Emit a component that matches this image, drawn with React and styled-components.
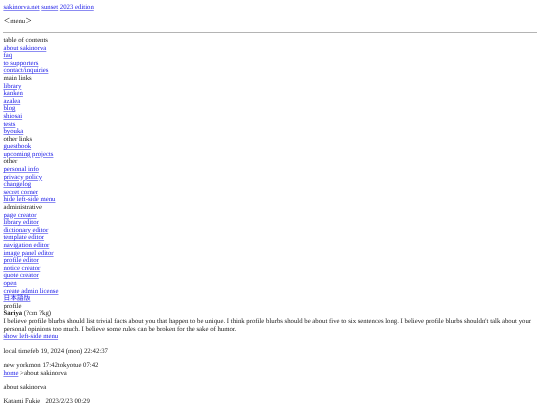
import styled, { createGlobalStyle } from "styled-components";

const GlobalStyle = createGlobalStyle`
  html, body {
    margin: 0;
    background: #fff;
  }

  body {
    height: 405px;
    overflow: hidden;
    color: #222;
    font-family: "Liberation Serif", "Noto Sans CJK JP", serif;
    font-size: 6.75px;
    line-height: 7.6px;
    text-rendering: geometricPrecision;
  }

  a {
    color: #2020e8;
    text-decoration: underline;
    text-decoration-color: #8c8cf2;
  }
`;

// the reference is a shrunken page, so the whole of it is slightly soft
const Page = styled.div`
  padding: 3.8px 3.4px 3.4px;
  filter: blur(0.5px);
`;

const Header = styled.div`
  margin-bottom: 6.8px;
`;

const MenuToggle = styled.div`
  margin-bottom: 6.4px;
`;

const Rule = styled.hr`
  margin: 0 0 3.8px;
  border: 0;
  border-top: 1px solid #b4b4b4;
`;

const Section = styled.div`
  display: flex;
  flex-direction: column;
  align-items: flex-start;
`;

const Blurb = styled.div`
  width: 100%;
`;

const Paragraph = styled.p`
  margin: 6.8px 0;
`;

const Crumbs = styled.div`
  margin-bottom: 6.8px;
`;

const menu = [
  {
    title: "table of contents",
    links: ["about sakinorva", "faq", "to supporters", "contact/inquiries"],
  },
  {
    title: "main links",
    links: ["library", "kanken", "azalea", "blog", "shiosai", "tests", "byouka"],
  },
  {
    title: "other links",
    links: ["guestbook", "upcoming projects"],
  },
  {
    title: "other",
    links: ["personal info", "privacy policy", "changelog", "secret corner", "hide left-side menu"],
  },
  {
    title: "administrative",
    links: [
      "page creator",
      "library editor",
      "dictionary editor",
      "template editor",
      "navigation editor",
      "image panel editor",
      "profile editor",
      "notice creator",
      "quote creator",
      "open",
      "create admin license",
    ],
  },
];

export default function App() {
  return (
    <>
      <GlobalStyle />
      <Page>
        <Header>
          <a href="#">sakinorva.net</a> <a href="#">sunset</a> <a href="#">2023 edition</a>
        </Header>
        <MenuToggle>＜menu＞</MenuToggle>
        <Rule />
        {menu.map((group) => (
          <Section key={group.title}>
            <span>{group.title}</span>
            {group.links.map((link) => (
              <a href="#" key={link}>
                {link}
              </a>
            ))}
          </Section>
        ))}
        <Section>
          <a href="#">日本語版</a>
          <span>profile</span>
        </Section>
        <Blurb>
          <div>
            <b>Sariya</b> (?cm ?kg)
          </div>
          <div>
            I believe profile blurbs should list trivial facts about you that happen to be unique. I
            think profile blurbs should be about five to six sentences long. I believe profile blurbs
            shouldn't talk about your personal opinions too much. I believe some rules can be broken
            for the sake of humor.
          </div>
          <a href="#">show left-side menu</a>
        </Blurb>
        <Paragraph>local timefeb 19, 2024 (mon) 22:42:37</Paragraph>
        <div>new yorkmon 17:42tokyotue 07:42</div>
        <Crumbs>
          <a href="#">home</a> &gt;about sakinorva
        </Crumbs>
        <Paragraph>about sakinorva</Paragraph>
        <div>Katami Fukie &nbsp;&nbsp;2023/2/23 00:29</div>
      </Page>
    </>
  );
}
